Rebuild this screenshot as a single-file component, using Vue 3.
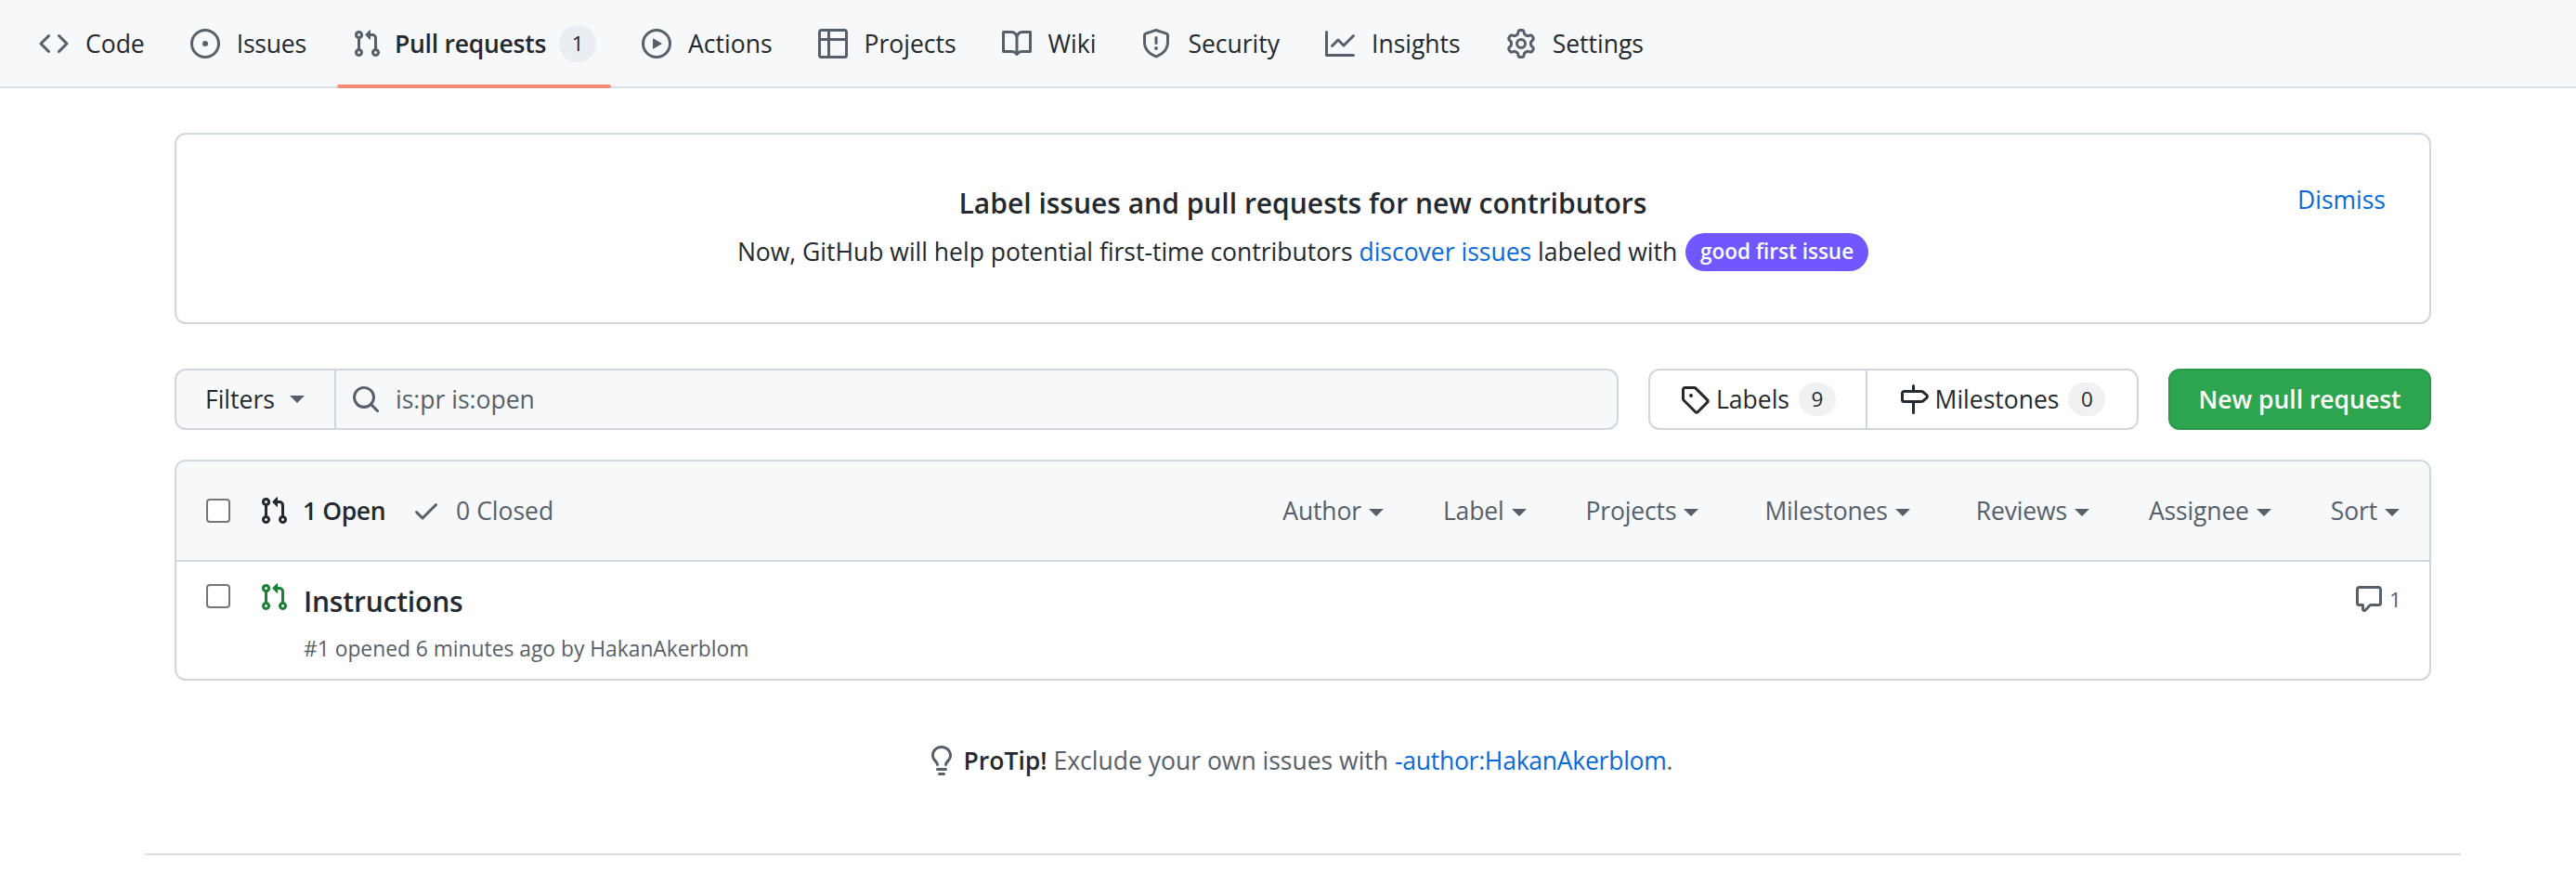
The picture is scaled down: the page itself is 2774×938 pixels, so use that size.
<script setup>
const icons = {
  code: 'M11.28 3.22a.75.75 0 0 0-1.06 1.06L13.94 8l-3.72 3.72a.75.75 0 1 0 1.06 1.06l4.25-4.25a.75.75 0 0 0 0-1.06L11.28 3.22zm-6.56 0a.75.75 0 0 1 1.06 1.06L2.06 8l3.72 3.72a.75.75 0 0 1-1.06 1.06L.47 8.53a.75.75 0 0 1 0-1.06l4.25-4.25z',
  issue: 'M8 9.5a1.5 1.5 0 1 0 0-3 1.5 1.5 0 0 0 0 3ZM8 0a8 8 0 1 1 0 16A8 8 0 0 1 8 0ZM1.5 8a6.5 6.5 0 1 0 13 0 6.5 6.5 0 0 0-13 0Z',
  pr: 'M1.5 3.25a2.25 2.25 0 1 1 3 2.122v5.256a2.251 2.251 0 1 1-1.5 0V5.372A2.25 2.25 0 0 1 1.5 3.25Zm5.677-.177L9.573.677A.25.25 0 0 1 10 .854V2.5h1A2.5 2.5 0 0 1 13.5 5v5.628a2.251 2.251 0 1 1-1.5 0V5a1 1 0 0 0-1-1h-1v1.646a.25.25 0 0 1-.427.177L7.177 3.427a.25.25 0 0 1 0-.354ZM3.75 2.5a.75.75 0 1 0 0 1.5.75.75 0 0 0 0-1.5Zm0 9.5a.75.75 0 1 0 0 1.5.75.75 0 0 0 0-1.5Zm8.25.75a.75.75 0 1 0 1.5 0 .75.75 0 0 0-1.5 0Z',
  play: 'M8 0a8 8 0 1 1 0 16A8 8 0 0 1 8 0ZM1.5 8a6.5 6.5 0 1 0 13 0 6.5 6.5 0 0 0-13 0Zm4.879-2.773 4.264 2.559a.25.25 0 0 1 0 .428l-4.264 2.559A.25.25 0 0 1 6 10.559V5.442a.25.25 0 0 1 .379-.215Z',
  table: 'M0 1.75C0 .784.784 0 1.75 0h12.5C15.216 0 16 .784 16 1.75v12.5A1.75 1.75 0 0 1 14.25 16H1.75A1.75 1.75 0 0 1 0 14.25ZM6.5 6.5v8h7.75a.25.25 0 0 0 .25-.25V6.5Zm8-1.5V1.75a.25.25 0 0 0-.25-.25H6.5V5Zm-13 1.5v7.75c0 .138.112.25.25.25H5v-8ZM5 5V1.5H1.75a.25.25 0 0 0-.25.25V5Z',
  book: 'M0 1.75A.75.75 0 0 1 .75 1h4.253c1.227 0 2.317.59 3 1.501A3.743 3.743 0 0 1 11.006 1h4.245a.75.75 0 0 1 .75.75v10.5a.75.75 0 0 1-.75.75h-4.507a2.25 2.25 0 0 0-1.591.659l-.622.621a.75.75 0 0 1-1.06 0l-.622-.621A2.25 2.25 0 0 0 5.258 13H.75a.75.75 0 0 1-.75-.75Zm7.251 10.324.004-5.073-.002-2.253A2.25 2.25 0 0 0 5.003 2.5H1.5v9h3.757a3.75 3.75 0 0 1 1.994.574ZM8.755 4.75l-.004 7.322a3.752 3.752 0 0 1 1.992-.572H14.5v-9h-3.495a2.25 2.25 0 0 0-2.25 2.25Z',
  shield: 'M7.467.133a1.748 1.748 0 0 1 1.066 0l5.25 1.68A1.75 1.75 0 0 1 15 3.48V7c0 1.566-.32 3.182-1.303 4.682-.983 1.498-2.585 2.813-5.032 3.855a1.697 1.697 0 0 1-1.33 0c-2.447-1.042-4.049-2.357-5.032-3.855C1.32 10.182 1 8.566 1 7V3.48a1.75 1.75 0 0 1 1.217-1.667Zm.61 1.429a.25.25 0 0 0-.153 0l-5.25 1.68a.25.25 0 0 0-.174.238V7c0 1.358.275 2.666 1.057 3.86.784 1.194 2.121 2.34 4.366 3.297a.196.196 0 0 0 .154 0c2.245-.956 3.582-2.104 4.366-3.298C13.225 9.666 13.5 8.36 13.5 7V3.48a.251.251 0 0 0-.174-.237l-5.25-1.68ZM8.75 4.75v3a.75.75 0 0 1-1.5 0v-3a.75.75 0 0 1 1.5 0ZM9 10.5a1 1 0 1 1-2 0 1 1 0 0 1 2 0Z',
  graph: 'M1.5 1.75V13.5h13.75a.75.75 0 0 1 0 1.5H.75a.75.75 0 0 1-.75-.75V1.75a.75.75 0 0 1 1.5 0Zm14.28 2.53-5.25 5.25a.75.75 0 0 1-1.06 0L7 7.06 4.28 9.78a.751.751 0 0 1-1.042-.018.751.751 0 0 1-.018-1.042l3.25-3.25a.75.75 0 0 1 1.06 0L10 7.94l4.72-4.72a.751.751 0 0 1 1.042.018.751.751 0 0 1 .018 1.042Z',
  gear: 'M8 0a8.2 8.2 0 0 1 .701.031C9.444.095 9.99.645 10.16 1.29l.288 1.107c.018.066.079.158.212.224.231.114.454.243.668.386.123.082.233.09.299.071l1.103-.303c.644-.176 1.392.021 1.82.63.27.385.506.792.704 1.218.315.675.111 1.422-.364 1.891l-.814.806c-.049.048-.098.147-.088.294.016.257.016.515 0 .772-.01.147.038.246.088.294l.814.806c.475.469.679 1.216.364 1.891a7.977 7.977 0 0 1-.704 1.217c-.428.61-1.176.807-1.82.63l-1.102-.302c-.067-.019-.177-.011-.3.071a5.909 5.909 0 0 1-.668.386c-.133.066-.194.158-.211.224l-.29 1.106c-.168.646-.715 1.196-1.458 1.26a8.006 8.006 0 0 1-1.402 0c-.743-.064-1.289-.614-1.458-1.26l-.289-1.106c-.018-.066-.079-.158-.212-.224a5.738 5.738 0 0 1-.668-.386c-.123-.082-.233-.09-.299-.071l-1.103.303c-.644.176-1.392-.021-1.82-.63a8.12 8.12 0 0 1-.704-1.218c-.315-.675-.111-1.422.363-1.891l.815-.806c.05-.048.098-.147.088-.294a6.214 6.214 0 0 1 0-.772c.01-.147-.038-.246-.088-.294l-.815-.806C.635 6.045.431 5.298.746 4.623a7.92 7.92 0 0 1 .704-1.217c.428-.61 1.176-.807 1.82-.63l1.102.302c.067.019.177.011.3-.071.214-.143.437-.272.668-.386.133-.066.194-.158.211-.224l.29-1.106C6.009.645 6.556.095 7.299.03 7.53.01 7.764 0 8 0Zm-.571 1.525c-.036.003-.108.036-.137.146l-.289 1.105c-.147.561-.549.967-.998 1.189-.173.086-.34.183-.5.29-.417.278-.97.423-1.529.27l-1.103-.303c-.109-.03-.175.016-.195.045-.22.312-.412.644-.573.99-.014.031-.021.11.059.19l.815.806c.411.406.562.957.53 1.456a4.709 4.709 0 0 0 0 .582c.032.499-.119 1.05-.53 1.456l-.815.806c-.081.08-.073.159-.059.19.162.346.353.677.573.989.02.03.085.076.195.046l1.102-.303c.56-.153 1.113-.008 1.53.27.161.107.328.204.501.29.447.222.85.629.997 1.189l.289 1.105c.029.109.101.143.137.146a6.6 6.6 0 0 0 1.142 0c.036-.003.108-.036.137-.146l.289-1.105c.147-.561.549-.967.998-1.189.173-.086.34-.183.5-.29.417-.278.97-.423 1.529-.27l1.103.303c.109.029.175-.016.195-.045.22-.313.411-.644.573-.99.014-.031.021-.11-.059-.19l-.815-.806c-.411-.406-.562-.957-.53-1.456a4.709 4.709 0 0 0 0-.582c-.032-.499.119-1.05.53-1.456l.815-.806c.081-.08.073-.159.059-.19a6.464 6.464 0 0 0-.573-.989c-.02-.03-.085-.076-.195-.046l-1.102.303c-.56.153-1.113.008-1.53-.27a4.44 4.44 0 0 0-.501-.29c-.447-.222-.85-.629-.997-1.189l-.289-1.105c-.029-.11-.101-.143-.137-.146a6.6 6.6 0 0 0-1.142 0ZM11 8a3 3 0 1 1-6 0 3 3 0 0 1 6 0ZM9.5 8a1.5 1.5 0 1 0-3.001.001A1.5 1.5 0 0 0 9.5 8Z',
  search: 'M10.68 11.74a6 6 0 0 1-7.922-8.982 6 6 0 0 1 8.982 7.922l3.04 3.04a.749.749 0 0 1-.326 1.275.749.749 0 0 1-.734-.215ZM11.5 7a4.499 4.499 0 1 0-8.997 0A4.499 4.499 0 0 0 11.5 7Z',
  tag: 'M1 7.775V2.75C1 1.784 1.784 1 2.75 1h5.025c.464 0 .91.184 1.238.513l6.25 6.25a1.75 1.75 0 0 1 0 2.474l-5.026 5.026a1.75 1.75 0 0 1-2.474 0l-6.25-6.25A1.752 1.752 0 0 1 1 7.775Zm1.5 0c0 .066.026.13.073.177l6.25 6.25a.25.25 0 0 0 .354 0l5.025-5.025a.25.25 0 0 0 0-.354l-6.25-6.25a.25.25 0 0 0-.177-.073H2.75a.25.25 0 0 0-.25.25ZM6 5a1 1 0 1 1 0 2 1 1 0 0 1 0-2Z',
  milestone: 'M7.75 0a.75.75 0 0 1 .75.75V3h3.634c.414 0 .814.147 1.13.414l2.07 1.75a1.75 1.75 0 0 1 0 2.672l-2.07 1.75a1.75 1.75 0 0 1-1.13.414H8.5v5.25a.75.75 0 0 1-1.5 0V10H2.75A1.75 1.75 0 0 1 1 8.25v-3.5C1 3.784 1.784 3 2.75 3H7V.75A.75.75 0 0 1 7.75 0Zm4.384 8.5a.25.25 0 0 0 .161-.06l2.07-1.75a.248.248 0 0 0 0-.38l-2.07-1.75a.25.25 0 0 0-.161-.06H2.75a.25.25 0 0 0-.25.25v3.5c0 .138.112.25.25.25h9.384Z',
  check: 'M13.78 4.22a.75.75 0 0 1 0 1.06l-7.25 7.25a.75.75 0 0 1-1.06 0L2.22 9.28a.751.751 0 0 1 .018-1.042.751.751 0 0 1 1.042-.018L6 10.94l6.72-6.72a.75.75 0 0 1 1.06 0Z',
  comment: 'M1 2.75C1 1.784 1.784 1 2.75 1h10.5c.966 0 1.75.784 1.75 1.75v7.5A1.75 1.75 0 0 1 13.25 12H9.06l-2.573 2.573A1.458 1.458 0 0 1 4 13.543V12H2.75A1.75 1.75 0 0 1 1 10.25Zm1.75-.25a.25.25 0 0 0-.25.25v7.5c0 .138.112.25.25.25h2a.75.75 0 0 1 .75.75v2.19l2.72-2.72a.749.749 0 0 1 .53-.22h4.5a.25.25 0 0 0 .25-.25v-7.5a.25.25 0 0 0-.25-.25Z',
  bulb: 'M8 1.5c-2.363 0-4 1.69-4 3.75 0 .984.424 1.625.984 2.304l.214.253c.223.264.47.556.673.848.284.411.537.896.621 1.49a.75.75 0 0 1-1.484.211c-.04-.282-.163-.547-.37-.847a8.456 8.456 0 0 0-.542-.68c-.084-.1-.173-.205-.268-.32C3.201 7.75 2.5 6.766 2.5 5.25 2.5 2.31 4.863 0 8 0s5.5 2.31 5.5 5.25c0 1.516-.701 2.5-1.328 3.259-.095.115-.184.22-.268.319-.207.245-.383.453-.541.681-.208.3-.33.565-.37.847a.751.751 0 0 1-1.485-.212c.084-.593.337-1.078.621-1.489.203-.292.45-.584.673-.848.075-.088.147-.173.213-.253.561-.679.985-1.32.985-2.304 0-2.06-1.637-3.75-4-3.75ZM5.75 12h4.5a.75.75 0 0 1 0 1.5h-4.5a.75.75 0 0 1 0-1.5ZM6 15.25a.75.75 0 0 1 .75-.75h2.5a.75.75 0 0 1 0 1.5h-2.5a.75.75 0 0 1-.75-.75Z'
}
const tabs = [
  { name: 'Code', icon: 'code' },
  { name: 'Issues', icon: 'issue' },
  { name: 'Pull requests', icon: 'pr', count: 1, active: true },
  { name: 'Actions', icon: 'play' },
  { name: 'Projects', icon: 'table' },
  { name: 'Wiki', icon: 'book' },
  { name: 'Security', icon: 'shield' },
  { name: 'Insights', icon: 'graph' },
  { name: 'Settings', icon: 'gear' }
]
const filters = ['Author', 'Label', 'Projects', 'Milestones', 'Reviews', 'Assignee', 'Sort']
</script>

<template>
  <div class="page">
    <nav class="tabs">
      <a v-for="t in tabs" :key="t.name" class="tab" :class="{ active: t.active }">
        <svg class="ic tab-ic" viewBox="0 0 16 16"><path :d="icons[t.icon]" /></svg>
        <span class="tab-label">{{ t.name }}</span>
        <span v-if="t.count" class="counter tab-count">{{ t.count }}</span>
      </a>
    </nav>

    <main class="main">
      <section class="banner">
        <a class="link dismiss">Dismiss</a>
        <h2 class="banner-title">Label issues and pull requests for new contributors</h2>
        <p class="banner-sub">
          Now, GitHub will help potential first-time contributors
          <a class="link">discover issues</a> labeled with
          <span class="gfi">good first issue</span>
        </p>
      </section>

      <div class="toolbar">
        <div class="filter-group">
          <button class="filters-btn">Filters <i class="caret"></i></button>
          <div class="search">
            <svg class="ic muted" viewBox="0 0 16 16"><path :d="icons.search" /></svg>
            <span>is:pr is:open</span>
          </div>
        </div>
        <div class="nav-group">
          <a class="nav-item">
            <svg class="ic" viewBox="0 0 16 16"><path :d="icons.tag" /></svg>
            <span>Labels</span><span class="counter">9</span>
          </a>
          <a class="nav-item">
            <svg class="ic" viewBox="0 0 16 16"><path :d="icons.milestone" /></svg>
            <span>Milestones</span><span class="counter">0</span>
          </a>
        </div>
        <button class="new-pr">New pull request</button>
      </div>

      <section class="box">
        <header class="box-head">
          <span class="check"></span>
          <svg class="ic state-ic" viewBox="0 0 16 16"><path :d="icons.pr" /></svg>
          <strong class="open">1 Open</strong>
          <svg class="ic muted closed-ic" viewBox="0 0 16 16"><path :d="icons.check" /></svg>
          <span class="closed">0 Closed</span>
          <div class="head-filters">
            <span v-for="f in filters" :key="f" class="head-filter">{{ f }} <i class="caret"></i></span>
          </div>
        </header>
        <div class="row">
          <span class="check row-check"></span>
          <svg class="ic green row-ic" viewBox="0 0 16 16"><path :d="icons.pr" /></svg>
          <div class="row-body">
            <a class="row-title">Instructions</a>
            <div class="row-meta">#1 opened 6 minutes ago by HakanAkerblom</div>
          </div>
          <div class="comments">
            <svg class="ic muted" viewBox="0 0 16 16"><path :d="icons.comment" /></svg>
            <span>1</span>
          </div>
        </div>
      </section>

      <p class="protip">
        <svg class="ic muted" viewBox="0 0 16 16"><path :d="icons.bulb" /></svg>
        <strong>ProTip!</strong> Exclude your own issues with <a class="link">-author:HakanAkerblom</a>.
      </p>
    </main>

    <div class="foot-line"></div>
  </div>
</template>

<style>
html, body { background: #fff; }
</style>

<style scoped>
.page {
  width: 2774px;
  height: 938px;
  overflow: hidden;
  font-family: "Open Sans", "Noto Sans", sans-serif;
  font-size: 26.5px;
  color: #24292f;
  background: #fff;
  box-sizing: border-box;
}
.ic { width: 32px; height: 32px; fill: currentColor; flex: none; display: block; }
.muted { color: #57606a; }
.green { color: #1a7f37; }
.link { color: #0969da; }

.tabs {
  display: flex;
  height: 95px;
  box-sizing: border-box;
  padding: 0 26px;
  gap: 17px;
  background: #f6f8fa;
  border-bottom: 2px solid #d8dee4;
}
.tab {
  position: relative;
  display: flex;
  align-items: center;
  padding: 0 16px;
  height: 93px;
}
.tab-ic { color: #57606a; margin-right: 18px; }
.tab:nth-child(2) .tab-label { letter-spacing: -0.2px; }
.tab.active { font-weight: 600; }
.tab.active .tab-ic { margin-right: 14px; }
.tab.active .tab-label { letter-spacing: -0.25px; }
.tab.active::after {
  content: "";
  position: absolute;
  left: 0;
  right: 0;
  bottom: -2px;
  height: 4px;
  border-radius: 2px;
  background: #fd8c73;
}
.counter {
  display: inline-block;
  min-width: 40px;
  height: 36px;
  line-height: 36px;
  box-sizing: border-box;
  padding: 0 8px;
  border-radius: 18px;
  background: #eff1f3;
  color: #24292f;
  font-size: 22.5px;
  font-weight: 400;
  text-align: center;
}
.tab-count { margin-left: 14px; height: 40px; line-height: 40px; border-radius: 20px; background: #eaeef2; }

.main { margin: 48px 156px 0 188px; }

.banner {
  position: relative;
  height: 206px;
  box-sizing: border-box;
  border: 2px solid #d0d7de;
  border-radius: 12px;
  padding-top: 52px;
  text-align: center;
}
.dismiss { position: absolute; top: 52px; right: 47px; }
.banner-title { margin: 0; font-size: 30px; font-weight: 600; line-height: 44px; }
.banner-sub { margin: 7px 0 0; line-height: 46px; }
.gfi {
  display: inline-block;
  height: 41px;
  line-height: 39px;
  padding: 0 16px;
  border-radius: 21px;
  background: #7057ff;
  color: #fff;
  font-size: 22.5px;
  font-weight: 600;
  vertical-align: top;
  margin: 3px 0 0 2px;
}

.toolbar { display: flex; height: 66px; margin-top: 48px; }
.filter-group { display: flex; width: 1555px; }
.filters-btn {
  width: 174px;
  padding: 0 0 0 31px;
  font: inherit;
  font-weight: 500;
  color: #24292f;
  background: #f6f8fa;
  border: 2px solid #d0d7de;
  border-radius: 12px 0 0 12px;
  display: flex;
  align-items: center;
  gap: 16px;
}
.search {
  flex: 1;
  display: flex;
  align-items: center;
  background: #f6f8fa;
  border: 2px solid #d0d7de;
  border-left: none;
  border-radius: 0 12px 12px 0;
  padding-left: 16px;
  gap: 16px;
  color: #57606a;
}
.caret {
  display: inline-block;
  width: 0;
  height: 0;
  border: 8px solid transparent;
  border-top-color: currentColor;
  border-bottom: 0;
  vertical-align: middle;
}
.filters-btn .caret { color: #57606a; }
.nav-group {
  display: flex;
  margin-left: 32px;
  width: 528px;
  box-sizing: border-box;
  border: 2px solid #d0d7de;
  border-radius: 12px;
}
.nav-item { display: flex; align-items: center; justify-content: center; gap: 7px; font-weight: 500; }
.nav-item:first-child { width: 234px; border-right: 2px solid #d0d7de; box-sizing: border-box; }
.nav-item:last-child { flex: 1; }
.nav-item .counter { margin-left: 3px; }
.new-pr {
  margin-left: 32px;
  flex: 1;
  padding: 0;
  font: inherit;
  font-weight: 600;
  color: #fff;
  background: #2da44e;
  border: 2px solid #2c974b;
  border-radius: 12px;
}

.box {
  margin-top: 32px;
  height: 238px;
  box-sizing: border-box;
  border: 2px solid #d0d7de;
  border-radius: 12px;
  overflow: hidden;
}
.box-head {
  display: flex;
  align-items: center;
  height: 108px;
  box-sizing: border-box;
  padding: 0 32px;
  background: #f6f8fa;
  border-bottom: 2px solid #d0d7de;
}
.check {
  width: 26px;
  height: 26px;
  flex: none;
  box-sizing: border-box;
  border: 2px solid #767676;
  border-radius: 4px;
  background: #fff;
}
.state-ic { margin-left: 31px; }
.open { margin-left: 15px; font-weight: 600; letter-spacing: -0.4px; }
.closed-ic { margin-left: 28px; }
.closed { margin-left: 16px; color: #57606a; }
.head-filters { margin-left: auto; display: flex; gap: 64px; color: #57606a; letter-spacing: -0.15px; }
.head-filter { display: flex; align-items: center; gap: 8px; }
.head-filter:nth-child(4), .head-filter:nth-child(5) { margin-left: 7px; }
.head-filter .caret { margin-top: 3px; }

.row { display: flex; align-items: flex-start; padding: 0 30px 0 32px; }
.row-check { margin-top: 24px; }
.row-ic { margin-left: 31px; margin-top: 22px; }
.row-body { margin-left: 16px; margin-top: 21px; }
.row-title { display: block; font-size: 30px; font-weight: 600; line-height: 44px; letter-spacing: -0.2px; }
.row-meta { font-size: 22.8px; line-height: 32px; color: #57606a; margin-top: 13px; }
.comments {
  margin-left: auto;
  margin-top: 24px;
  display: flex;
  align-items: center;
  gap: 6px;
  font-size: 22.7px;
  color: #57606a;
}

.protip {
  margin: 68px 0 0;
  display: flex;
  justify-content: center;
  align-items: center;
  white-space: pre;
  color: #57606a;
  line-height: 36px;
}
.protip strong { color: #24292f; font-weight: 600; margin-left: 8px; }
.protip .link { letter-spacing: -0.25px; }
.foot-line { height: 2px; background: #d8dee4; margin: 82px 124px 0 156px; }
</style>
